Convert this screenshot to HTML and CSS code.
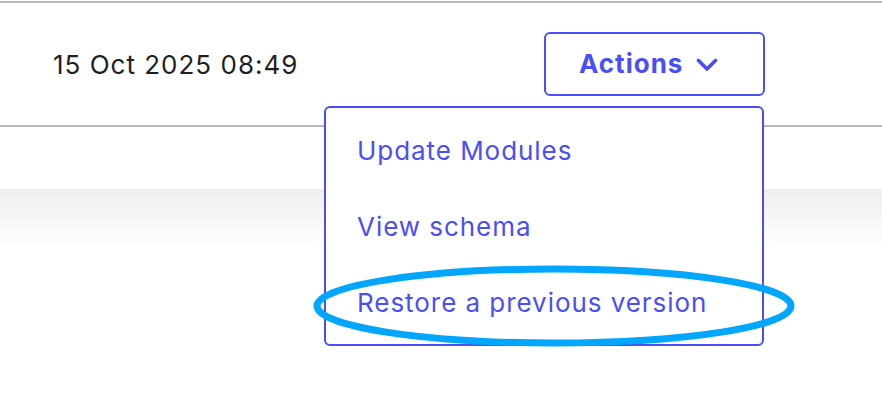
FILE: index.html
```html
<!DOCTYPE html>
<html>
<head>
<meta charset="utf-8">
<link rel="stylesheet" href="styles.css">
</head>
<body>
<div class="page">
  <div class="row">
    <div class="date">15 Oct 2025 08:49</div>
    <div class="actions">
      <button class="btn">Actions
        <svg class="chev" width="22" height="14" viewBox="0 0 22 14"><path d="M2.5 2.5 L11 11 L19.5 2.5" fill="none" stroke="currentColor" stroke-width="3.6" stroke-linecap="round" stroke-linejoin="round"/></svg>
      </button>
      <div class="menu">
        <div class="item">Update Modules</div>
        <div class="item">View schema</div>
        <div class="item">Restore a previous version</div>
      </div>
    </div>
  </div>
  <div class="gap"></div>
  <div class="shade"></div>
  <svg class="mark" width="882" height="410" viewBox="0 0 882 410"><ellipse cx="554" cy="306" rx="237" ry="37" fill="none" stroke="#00a6ff" stroke-width="7"/></svg>
</div>
</body>
</html>
```
FILE: styles.css
```css
html, body { margin: 0; padding: 0; background: #fff; }
body { font-family: "Inter", "DejaVu Sans", sans-serif; }
.page { position: relative; width: 882px; height: 410px; overflow: hidden; padding-top: 1px; box-sizing: border-box; }
.row {
  display: flex; align-items: center;
  height: 126px; box-sizing: border-box;
  border-top: 2px solid #b9b6b9; border-bottom: 2px solid #b9b6b9;
  padding-left: 53px; padding-right: 117px;
}
.date { font-size: 26px; color: #1f1f1f; letter-spacing: 1px; }
.actions { margin-left: auto; position: relative; }
.btn {
  width: 221px; height: 64px; box-sizing: border-box;
  border: 2px solid #4b4ef7; border-radius: 6px; background: #fff;
  color: #4b4ef7; font-family: inherit; font-size: 26px; font-weight: 700; letter-spacing: 1px;
  display: flex; align-items: center; justify-content: flex-start; gap: 13px;
  padding: 0 0 2px 33px; cursor: pointer;
}
.chev { margin-top: 3px; }
.menu {
  position: absolute; top: 74px; right: 1px; z-index: 2;
  width: 440px; box-sizing: border-box;
  border: 2px solid #4b4ef7; border-radius: 6px; background: #fff;
  padding: 4px 0;
}
.item {
  height: 76px; display: flex; align-items: center;
  padding-left: 31px; font-size: 26px; color: #4b4ef7; letter-spacing: 0.95px;
}
.gap { height: 62px; }
.shade { height: 60px; background: linear-gradient(#eeeeee, #ffffff); }
.mark { position: absolute; left: 0; top: 0; z-index: 3; pointer-events: none; }
```
